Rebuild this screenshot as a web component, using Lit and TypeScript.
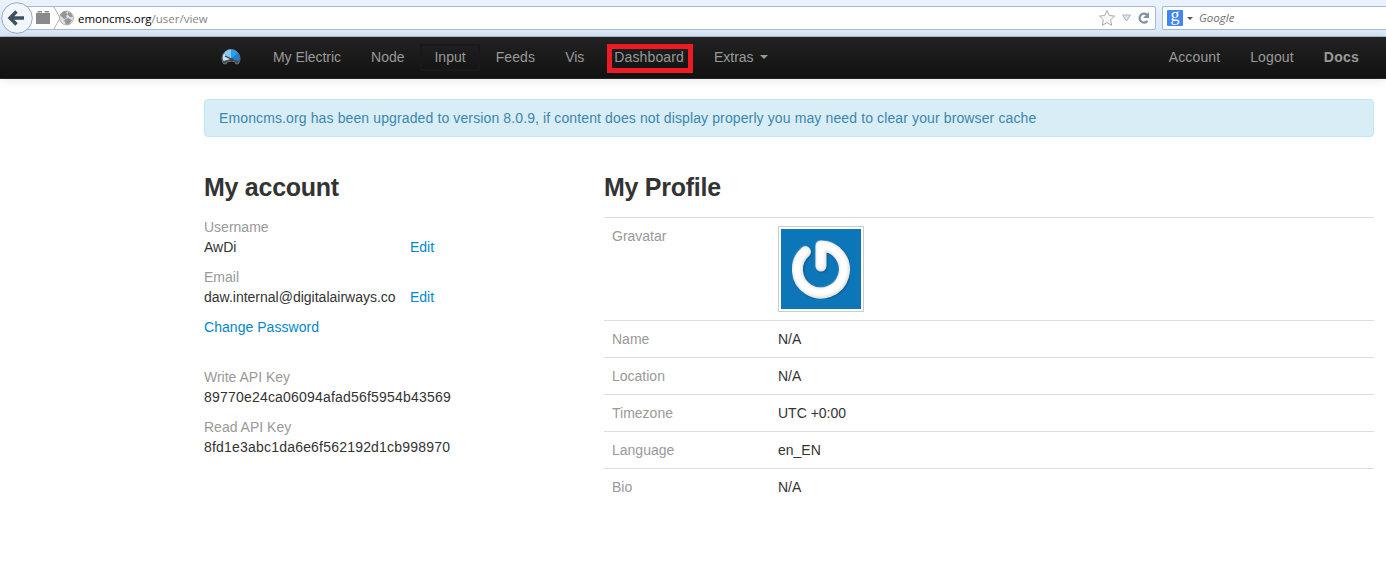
import { LitElement, html, css, svg } from "lit";
import { customElement } from "lit/decorators.js";

@customElement("browser-bar")
class BrowserBar extends LitElement {
  static styles = css`
    :host { display: block; height: 37px; font-family: "Open Sans", "Noto Sans", sans-serif; }
    .bar { box-sizing: border-box; height: 37px; display: flex; align-items: flex-start; padding: 6px 0 0 1px; background: linear-gradient(#ebf3fd, #d9e7f7); border-bottom: 1px solid #a9bfd3; overflow: hidden; }
    .back { width: 32px; height: 32px; margin-top: -4px; z-index: 1; flex: none; }
    .url { box-sizing: border-box; display: flex; align-items: center; width: 1138px; height: 24px; margin-left: -15px; padding-left: 17px; background: #fff; border: 1px solid #a9b9cb; border-radius: 2px; flex: none; }
    .ident { width: 39px; height: 22px; margin-right: 3px; flex: none; }
    .address { font-size: 11.5px; line-height: 22px; color: #858585; flex: 1; white-space: pre; padding-top: 1px; }
    .host { color: #000; }
    .tools { width: 60px; height: 22px; margin-right: -1px; }
    .search { box-sizing: border-box; display: flex; align-items: center; height: 24px; margin-left: 6px; flex: 1; background: #fff; border: 1px solid #a9b9cb; border-right: 0; border-radius: 2px 0 0 2px; padding-left: 4px; font-size: 11.5px; font-style: italic; color: #707070; }
    .engine { width: 16px; height: 16px; border-radius: 1px; background: #4285f4; color: #fff; font: 18px/11px "Liberation Serif", serif; text-align: center; }
    .drop { width: 0; border: 3px solid transparent; border-top-color: #555; border-bottom: 0; margin: 0 6px 0 4px; }
  `;
  render() {
    return html`<div class="bar">
      <svg class="back" viewBox="0 0 32 32">
        <circle cx="16" cy="16" r="15.3" fill="#f1f6fc" stroke="#9aaabd" />
        <path d="M9.500 16H23M15.500 9.500 9 16l6.500 6.500" fill="none" stroke="#40505f" stroke-width="3.400" />
      </svg>
      <div class="url">
        <svg class="ident" viewBox="0 0 39 22">
          <path d="M0 6h14v11H0zM1.500 4h4.500v1.500H1.500zM8.500 4H13v1.500H8.500z" fill="#8a8a8a" />
          <path d="M18 0 24 11 18 22" fill="none" stroke="#b5b5b5" />
          <circle cx="30.500" cy="11" r="7" fill="#dedede" stroke="#aaa" stroke-width=".8" />
          <path d="M24 8l3-3.500 4-.5-1 2 2 1-2 2 1 2-3 1-2-2zM32 5l3 1 2 4-3 0-2-2zM28 13l4-2 4 2-3 4.500h-3z" fill="#969696" />
        </svg>
        <div class="address"><span class="host">emoncms.org</span>/user/view</div>
        <svg class="tools" viewBox="0 0 60 22">
          <path d="M11 3.500l2.300 5 5.200.6-3.900 3.700 1.100 5.500L11 15.600l-4.700 2.700 1.100-5.500L3.500 9.100l5.200-.6z" fill="#fafafa" stroke="#aaa" />
          <path d="M26.500 8h8l-4 6z" fill="#dde4ec" stroke="#aab5c0" />
          <path d="M51 7.700A4.500 4.500 0 1 0 51.500 14" fill="none" stroke="#8291a3" stroke-width="2.200" />
          <path d="M53 5v6h-6z" fill="#8291a3" />
        </svg>
      </div>
      <div class="search"><div class="engine">g</div><div class="drop"></div>Google</div>
    </div>`;
  }
}

@customElement("nav-bar")
class NavBar extends LitElement {
  static styles = css`
    :host { display: block; }
    .nav { box-sizing: border-box; height: 42px; display: flex; padding: 0 12px 0 204px; background: linear-gradient(#222, #111); border-bottom: 1px solid #252525; box-shadow: 0 1px 10px rgba(0,0,0,.1); font: 14px/20px "Liberation Sans", Arial, sans-serif; color: #999; }
    .logo { width: 22px; height: 22px; margin: 9px 16px 0; flex: none; }
    .item { padding: 10px 15px; white-space: nowrap; display: flex; }
    .right { margin-left: auto; display: flex; }
    .strong { font-weight: bold; letter-spacing: .25px; }
    .tight { letter-spacing: -.04px; }
    .wide { letter-spacing: .12px; }
    .caret { border: 4px solid transparent; border-top-color: #999; border-bottom: 0; width: 0; height: 0; margin: 8px 0 0 6px; }
    .marked { position: relative; }
    .marked::after { content: ""; position: absolute; left: 8px; right: 6px; top: 7px; height: 19px; border: 5px solid #ed1c24; }
    .smudge { position: relative; }
    .smudge::after { content: ""; position: absolute; left: 1px; right: 1px; top: 7px; height: 23px; border: 2px solid #191919; }
  `;
  render() {
    return html`<div class="nav">
      <svg class="logo" viewBox="0 0 22 22">
        <path d="M3.500 17.500A9 9 0 1 1 18.500 17.500L16 18 14.500 15.500h-7L6 18z" fill="#4a4a4a" stroke="#757575" />
        <path d="M11 13 3.500 15A8 8 0 0 1 4 7.500z" fill="#bfe3fa" />
        <path d="M11 13 4 7.500A8 8 0 0 1 11 3.500z" fill="#85c8f3" />
        <path d="M11 13V3.500A8 8 0 0 1 18 7.500z" fill="#2b9df2" />
        <path d="M11 13 18 7.500A8 8 0 0 1 18.500 15z" fill="#1284e0" />
        <path d="M5 10l7 3.500" stroke="#333" stroke-width="1.200" />
        <circle cx="11.500" cy="14" r="2" fill="#444" />
      </svg>
      <div class="item tight">My Electric</div><div class="item">Node</div><div class="item smudge">Input</div>
      <div class="item wide">Feeds</div><div class="item">Vis</div><div class="item marked wide">Dashboard</div>
      <div class="item">Extras<span class="caret"></span></div>
      <div class="right"><div class="item wide">Account</div><div class="item wide">Logout</div><div class="item strong">Docs</div></div>
    </div>`;
  }
}

@customElement("app-root")
class AppRoot extends LitElement {
  static styles = css`
    :host { display: block; height: 586px; background: #fff; overflow: hidden; font: 14px/20px "Liberation Sans", Arial, sans-serif; color: #333; }
    .page { padding: 20px 12px 0 204px; }
    .alert { box-sizing: border-box; height: 38px; padding: 8px 14px; border: 1px solid #bce8f1; border-radius: 4px; background: #d9edf7; color: #3a87ad; letter-spacing: .12px; }
    .cols { display: grid; grid-template-columns: 370px 770px; column-gap: 30px; padding-top: 30px; }
    h2 { margin: 0; font-size: 25px; line-height: 40px; letter-spacing: -.27px; }
    .account { padding-top: 10px; }
    .field { margin-bottom: 10px; }
    .line { display: grid; grid-template-columns: 206px auto; }
    .gap { margin-bottom: 30px; letter-spacing: .04px; }
    .label { color: #999; }
    .key { letter-spacing: .2px; }
    .link { color: #08c; }
    .table { margin-top: 10px; }
    .row { display: grid; grid-template-columns: 166px auto; padding: 8px; border-top: 1px solid #ddd; }
    .avatar { display: block; box-sizing: border-box; width: 86px; height: 86px; padding: 2px; border: 1px solid #ccc; }
  `;
  render() {
    const rows = [["Name", "N/A"], ["Location", "N/A"], ["Timezone", "UTC +0:00"], ["Language", "en_EN"], ["Bio", "N/A"]];
    const power = svg`<path d="M24.500 22.800A23.500 23.500 0 1 0 40 17V37" fill="none" stroke-width="11" stroke-linecap="round" stroke-linejoin="round" />`;
    return html`<browser-bar></browser-bar><nav-bar></nav-bar>
      <div class="page">
        <div class="alert">Emoncms.org has been upgraded to version 8.0.9, if content does not display properly you may need to clear your browser cache</div>
        <div class="cols">
          <div>
            <h2>My account</h2>
            <div class="account">
              <div class="field"><div class="label">Username</div><div class="line"><span>AwDi</span><span class="link">Edit</span></div></div>
              <div class="field"><div class="label">Email</div><div class="line"><span>daw.internal@digitalairways.co</span><span class="link">Edit</span></div></div>
              <div class="link gap">Change Password</div>
              <div class="field"><div class="label">Write API Key</div><div class="key">89770e24ca06094afad56f5954b43569</div></div>
              <div class="field"><div class="label">Read API Key</div><div class="key">8fd1e3abc1da6e6f562192d1cb998970</div></div>
            </div>
          </div>
          <div>
            <h2>My Profile</h2>
            <div class="table">
              <div class="row"><span class="label">Gravatar</span>
                <svg class="avatar" viewBox="0 0 80 80">
                  <defs>
                    <filter id="bevel" x="-10%" y="-10%" width="120%" height="120%"><feGaussianBlur stdDeviation="1.2" /></filter>
                  </defs>
                  <rect width="80" height="80" fill="#0d76b8" />
                  <g stroke="#07568e" transform="translate(.8 .8)" filter="url(#bevel)">${power}</g>
                  <g stroke="#e4e4e4">${power}</g>
                  <g stroke="#fff" transform="translate(-.6 -.8)" filter="url(#bevel)"><path d="M24.500 22.800A23.500 23.500 0 1 0 40 17V37" fill="none" stroke-width="8" stroke-linecap="round" stroke-linejoin="round" /></g>
                </svg>
              </div>
              ${rows.map(([k, v]) => html`<div class="row"><span class="label">${k}</span><span>${v}</span></div>`)}
            </div>
          </div>
        </div>
      </div>`;
  }
}
